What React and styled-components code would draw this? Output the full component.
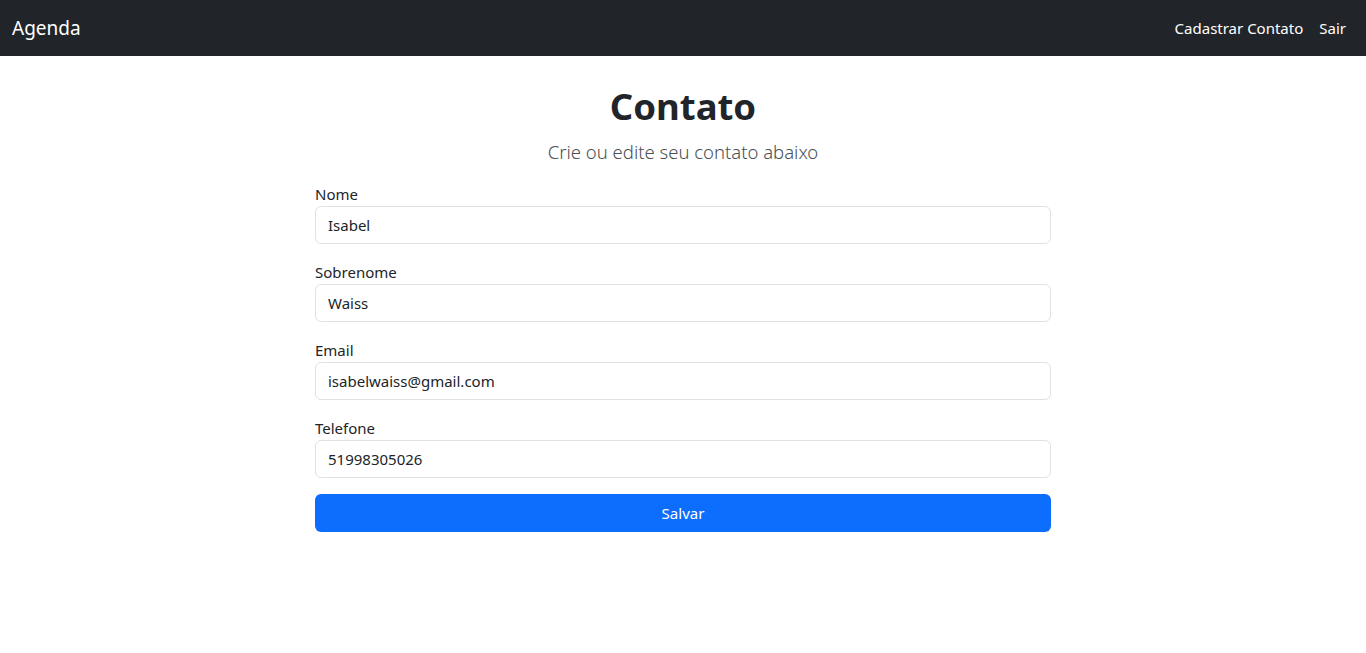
import React from "react";
import styled, { createGlobalStyle } from "styled-components";

const GlobalStyle = createGlobalStyle`
  body {
    margin: 0;
    font-family: "Noto Sans", "Open Sans", sans-serif;
    font-size: 15px;
    line-height: 24px;
    color: #212529;
    background: #fff;
  }
  * { box-sizing: border-box; }
`;

const Navbar = styled.nav`
  height: 56px;
  background: #212529;
  display: flex;
  align-items: center;
  justify-content: space-between;
  padding: 0 12px;
`;

const Brand = styled.a`
  color: #fff;
  font-size: 19px;
  text-decoration: none;
`;

const NavLinks = styled.div`
  display: flex;
`;

const NavLink = styled.a`
  color: #fff;
  padding: 8px;
  text-decoration: none;
`;

const Main = styled.main`
  width: 736px;
  margin: 26px auto 0;
`;

const Title = styled.h1`
  margin: 0 0 7px;
  font-size: 36.5px;
  font-weight: 700;
  line-height: 48px;
  text-align: center;
`;

const Lead = styled.p`
  margin: 0 0 15px;
  font-size: 18.5px;
  font-weight: 300;
  line-height: 30px;
  color: #4a4f55;
  text-align: center;
`;

const Field = styled.div`
  margin-bottom: 16px;
`;

const Label = styled.label`
  display: block;
`;

const Input = styled.input`
  display: block;
  width: 100%;
  height: 38px;
  padding: 6px 12px;
  font: inherit;
  color: #212529;
  border: 1px solid #dee2e6;
  border-radius: 6px;
  outline: none;
`;

const Button = styled.button`
  width: 100%;
  height: 38px;
  border: none;
  border-radius: 6px;
  background: #0d6efd;
  color: #fff;
  font: inherit;
  cursor: pointer;
`;

const fields = [
  { label: "Nome", value: "Isabel" },
  { label: "Sobrenome", value: "Waiss" },
  { label: "Email", value: "isabelwaiss@gmail.com" },
  { label: "Telefone", value: "51998305026" },
];

export default function App() {
  return (
    <>
      <GlobalStyle />
      <Navbar>
        <Brand href="#">Agenda</Brand>
        <NavLinks>
          <NavLink href="#">Cadastrar Contato</NavLink>
          <NavLink href="#">Sair</NavLink>
        </NavLinks>
      </Navbar>
      <Main>
        <Title>Contato</Title>
        <Lead>Crie ou edite seu contato abaixo</Lead>
        <form onSubmit={(e) => e.preventDefault()}>
          {fields.map((f) => (
            <Field key={f.label}>
              <Label>{f.label}</Label>
              <Input defaultValue={f.value} />
            </Field>
          ))}
          <Button type="submit">Salvar</Button>
        </form>
      </Main>
    </>
  );
}
